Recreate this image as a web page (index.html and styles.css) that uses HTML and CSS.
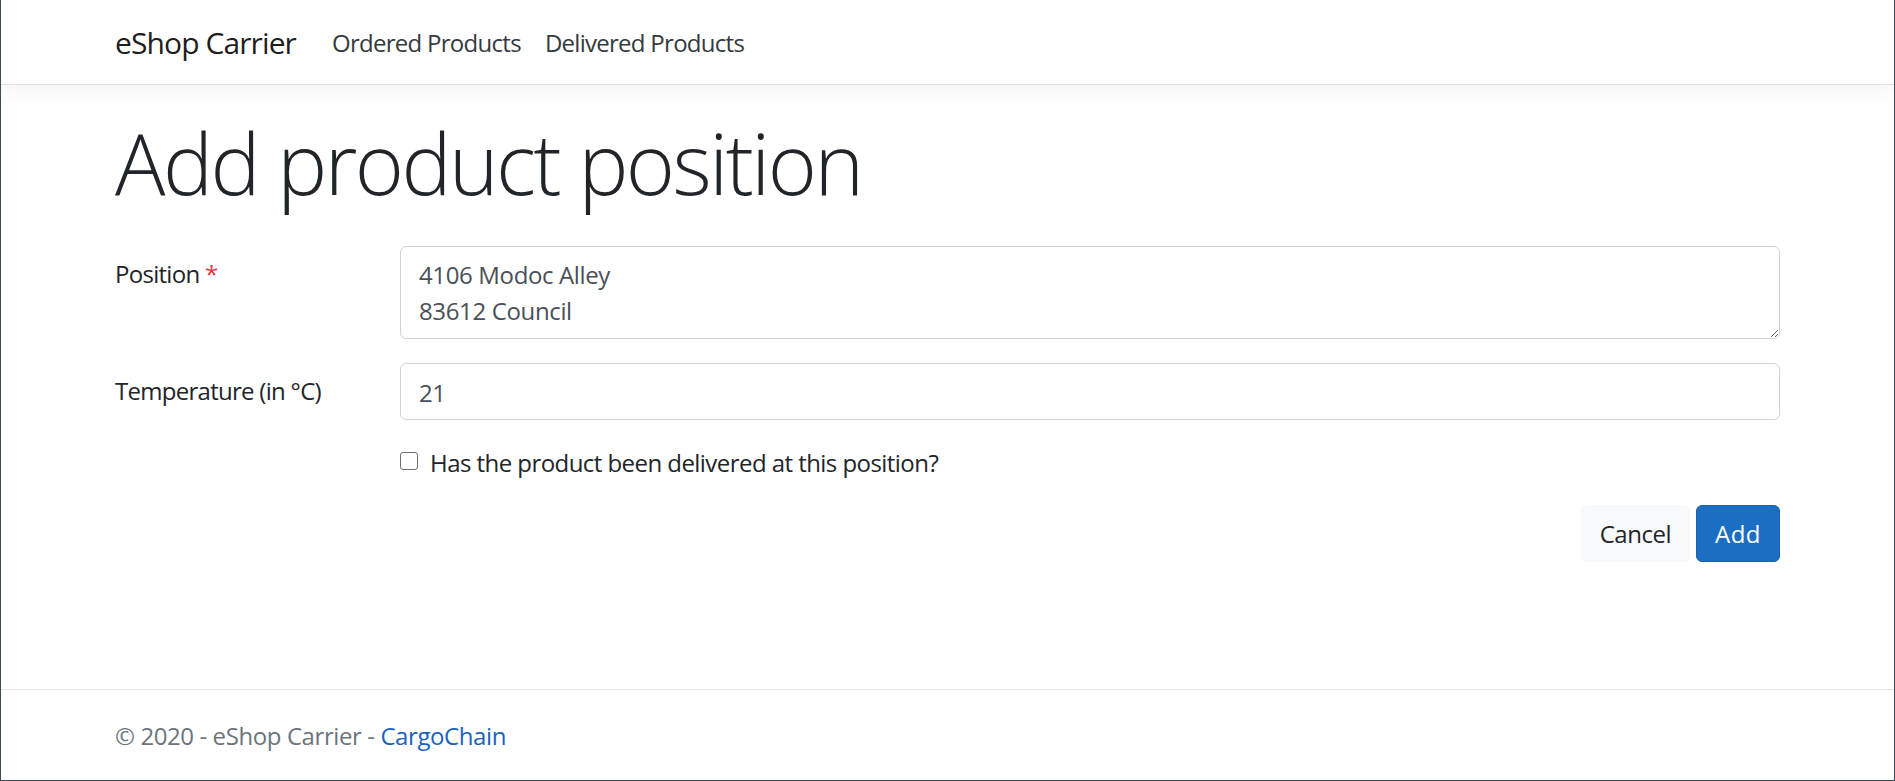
FILE: index.html
```html
<!DOCTYPE html>
<html lang="en">
<head>
<meta charset="utf-8">
<title>Add product position - eShop Carrier</title>
<link rel="stylesheet" href="styles.css">
</head>
<body>
<header>
  <nav class="navbar">
    <div class="container nav-inner">
      <a class="brand" href="#">eShop Carrier</a>
      <ul class="nav">
        <li><a class="nav-link" href="#">Ordered Products</a></li>
        <li><a class="nav-link" href="#">Delivered Products</a></li>
      </ul>
    </div>
  </nav>
</header>
<div class="container main-wrap">
  <main>
    <h1 class="title">Add product position</h1>
    <form class="form">
      <div class="form-row">
        <label class="col-label" for="position">Position <span class="req">*</span></label>
        <div class="col-field">
          <textarea id="position" class="control area" rows="2">4106 Modoc Alley
83612 Council</textarea>
        </div>
      </div>
      <div class="form-row">
        <label class="col-label" for="temp">Temperature (in °C)</label>
        <div class="col-field">
          <input id="temp" class="control" type="text" value="21">
        </div>
      </div>
      <div class="form-row">
        <div class="col-label"></div>
        <div class="col-field">
          <label class="check"><input type="checkbox" class="check-input"><span>Has the product been delivered at this position?</span></label>
        </div>
      </div>
      <div class="form-row last">
        <div class="col-label"></div>
        <div class="col-field actions">
          <button type="button" class="btn btn-light">Cancel</button>
          <button type="submit" class="btn btn-primary">Add</button>
        </div>
      </div>
    </form>
  </main>
</div>
<footer class="footer">
  <div class="container">© 2020 - eShop Carrier - <a href="#" class="link">CargoChain</a></div>
</footer>
</body>
</html>
```

FILE: styles.css
```css
* { box-sizing: border-box; }

html { height: 100%; }

body {
  margin: 0;
  min-height: 100vh;
  display: flex;
  flex-direction: column;
  font-family: "Open Sans", "Noto Sans", "Liberation Sans", sans-serif;
  font-size: 24px;
  line-height: 1.5;
  letter-spacing: -0.03em;
  color: #212529;
  background: #fff;
  border-left: 1px solid #3a4b5b;
  border-right: 1px solid #3a4b5b;
  border-bottom: 1px solid #3a4b5b;
}

a { text-decoration: none; }

.container {
  width: 100%;
  max-width: 1710px;
  padding: 0 22.5px;
  margin: 0 auto;
}

.navbar {
  background: #fff;
  border-bottom: 1px solid #dee2e6;
  box-shadow: 0 6px 18px rgba(0, 0, 0, 0.05);
  padding: 12px 0;
  margin-bottom: 24px;
}

.nav-inner {
  display: flex;
  align-items: center;
}

.brand {
  font-size: 30px;
  line-height: 45px;
  letter-spacing: -0.03em;
  padding: 8px 0 7px;
  margin-right: 24px;
  color: rgba(0, 0, 0, 0.9);
}

.nav {
  display: flex;
  list-style: none;
  margin: 0;
  padding: 0;
}

.nav-link {
  display: block;
  padding: 13px 12px 11px;
  color: #343a40;
  line-height: 36px;
}

.title {
  font-size: 84px;
  font-weight: 300;
  line-height: 1.2;
  letter-spacing: -0.03em;
  margin: 0 0 8px;
  padding-top: 4px;
}

.form { padding-top: 24px; }

.form-row {
  display: flex;
  margin: 0 -22.5px 24px;
}

.col-label {
  flex: 0 0 16.6667%;
  max-width: 16.6667%;
  padding: 10px 22.5px 8px;
  line-height: 36px;
}

.req { color: #dc3545; }

.col-field {
  flex: 0 0 83.3333%;
  max-width: 83.3333%;
  padding: 0 22.5px;
}

.control {
  display: block;
  width: 100%;
  height: 57px;
  padding: 10px 18px 8px;
  font: inherit;
  letter-spacing: -0.015em;
  line-height: 36px;
  color: #495057;
  background: #fff;
  border: 1px solid #ced4da;
  border-radius: 6px;
  outline: none;
}

.area {
  height: 93px;
  resize: vertical;
}

.check {
  display: flex;
  align-items: flex-start;
  line-height: 36px;
  letter-spacing: -0.023em;
  padding-top: 1px;
}

.check-input {
  appearance: none;
  -webkit-appearance: none;
  width: 18px;
  height: 18px;
  margin: 7px 12px 0 0;
  border: 1.5px solid #6f6f6f;
  border-radius: 3px;
  background: #fff;
  flex: 0 0 auto;
}

.actions {
  display: flex;
  justify-content: flex-end;
  gap: 6px;
}

.btn {
  font: inherit;
  line-height: 36px;
  padding: 10px 18px 9px;
  border: 1px solid transparent;
  border-radius: 6px;
  cursor: pointer;
}

.btn-light {
  letter-spacing: -0.02em;
  background: #f8f9fa;
  border-color: #f8f9fa;
  color: #212529;
}

.btn-primary {
  letter-spacing: 0.02em;
  background: #1b6ec2;
  border-color: #1861ac;
  color: #fff;
}

.footer {
  margin-top: auto;
  border-top: 1px solid #e5e5e5;
  line-height: 90px;
  letter-spacing: -0.017em;
  color: #6c757d;
  white-space: nowrap;
}

.footer .container { padding-top: 1px; line-height: 89px; }

.link { color: #1b62bd; }
```
